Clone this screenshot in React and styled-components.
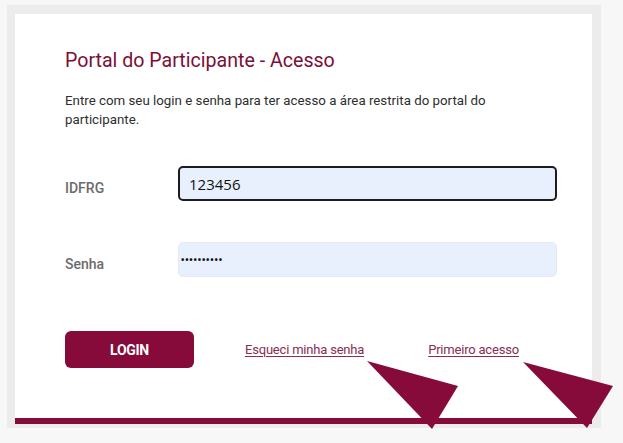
import React from 'react';
import styled, { createGlobalStyle } from 'styled-components';

const GlobalStyle = createGlobalStyle`
  html, body {
    margin: 0;
    padding: 0;
    background: #f7f7f7;
  }
  body {
    width: 623px;
    height: 443px;
    overflow: hidden;
    font-family: Roboto, "Liberation Sans", sans-serif;
  }
`;

const Page = styled.div`
  position: relative;
  width: 623px;
  height: 443px;
  padding: 5px 22px 0 7px;
  box-sizing: border-box;
`;

const Frame = styled.div`
  background: #ececec;
  padding: 9px 9px 4px 8px;
`;

const Card = styled.div`
  background: #fff;
  border-bottom: 6px solid #870b3a;
  padding: 35px 35px 50px 50px;
  display: flex;
  flex-direction: column;
`;

const Title = styled.h1`
  margin: 0;
  font-size: 19.6px;
  line-height: 24px;
  font-weight: 400;
  color: #7a0f37;
`;

const Intro = styled.p`
  margin: 18px 0 0;
  font-size: 13.3px;
  line-height: 19px;
  color: #2e2e2e;
  max-width: 450px;
`;

const Form = styled.form`
  margin-top: 37px;
  display: flex;
  flex-direction: column;
  gap: 41px;
`;

const Row = styled.div`
  display: grid;
  grid-template-columns: 113px 379px;
  align-items: center;
`;

const Label = styled.label`
  padding-top: 9px;
  font-size: 14px;
  font-weight: 500;
  color: #6b6b6b;
`;

const Field = styled.input`
  box-sizing: border-box;
  height: 35px;
  margin: 0;
  background: #e8f0fe;
  border: ${p => (p.$focused ? '2px solid #1c1c1c' : '1px solid #e4ebf7')};
  border-radius: 5px;
  padding: ${p => (p.$focused ? '0 0 0 9px' : '0 0 0 2px')};
  font-family: "Open Sans", "Noto Sans", sans-serif;
  font-size: ${p => (p.$small ? '9px' : '15px')};
  font-weight: ${p => (p.$small ? 700 : 400)};
  letter-spacing: ${p => (p.$small ? '0.8px' : '0')};
  color: #111;
  outline: none;
`;

const Actions = styled.div`
  margin-top: 54px;
  display: flex;
  align-items: center;
`;

const LoginButton = styled.button`
  width: 129px;
  height: 37px;
  border: none;
  border-radius: 6px;
  background: #870b3a;
  color: #fff;
  font-family: Roboto, "Liberation Sans", sans-serif;
  font-size: 14px;
  font-weight: 700;
  letter-spacing: -0.3px;
  cursor: pointer;
`;

const Link = styled.a`
  margin-left: ${p => p.$gap}px;
  font-size: 13px;
  color: #8a2d52;
  text-decoration: underline;
  text-underline-offset: 2px;
  letter-spacing: -0.2px;
`;

const Overlay = styled.svg`
  position: absolute;
  left: 0;
  top: 0;
  pointer-events: none;
`;

export default function App() {
  return (
    <>
      <GlobalStyle />
      <Page>
        <Frame>
          <Card>
            <Title>Portal do Participante - Acesso</Title>
            <Intro>
              Entre com seu login e senha para ter acesso a área restrita do portal do participante.
            </Intro>
            <Form onSubmit={e => e.preventDefault()}>
              <Row>
                <Label>IDFRG</Label>
                <Field $focused readOnly value="123456" />
              </Row>
              <Row>
                <Label>Senha</Label>
                <Field $small readOnly value="••••••••••" />
              </Row>
            </Form>
            <Actions>
              <LoginButton type="button">LOGIN</LoginButton>
              <Link href="#" $gap={51}>Esqueci minha senha</Link>
              <Link href="#" $gap={64}>Primeiro acesso</Link>
            </Actions>
          </Card>
        </Frame>
        <Overlay width="623" height="443" viewBox="0 0 623 443">
          <polygon points="367,361 458,386 432,429" fill="#870b3a" />
          <polygon points="523,362 613,386 587,428" fill="#870b3a" />
        </Overlay>
      </Page>
    </>
  );
}
